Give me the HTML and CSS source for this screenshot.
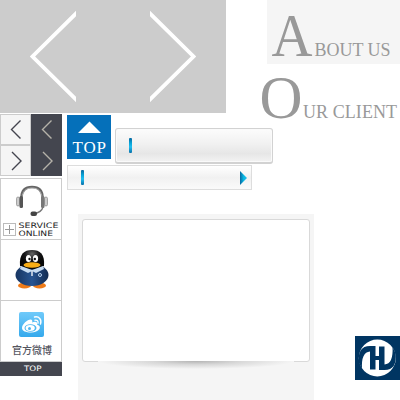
FILE: index.html
```html
<!DOCTYPE html>
<html lang="zh">
<head>
<meta charset="utf-8">
<title>Interface elements</title>
<link rel="stylesheet" href="styles.css">
</head>
<body>
<main class="main">
  <div class="slider">
    <svg class="arrow" width="46" height="92" viewBox="0 0 46 92"><path d="M48 1.500 2.500 46.500 48 91.500"/></svg>
    <svg class="arrow" width="46" height="92" viewBox="0 0 46 92"><path d="M-2 1.500 43.500 46.500-2 91.500"/></svg>
  </div>
  <div class="lower">
    <aside class="side">
      <div class="pager">
        <div class="cell"><svg width="29" height="29"><path d="M19.500 5.500 10.500 14.500 19.500 23.500"/></svg></div>
        <div class="cell dark"><svg width="29" height="29"><path d="M19.500 5.500 10.500 14.500 19.500 23.500"/></svg></div>
        <div class="cell"><svg width="29" height="29"><path d="M11 6 20 15 11 24"/></svg></div>
        <div class="cell dark"><svg width="29" height="29"><path d="M11 6 20 15 11 24"/></svg></div>
      </div>
      <div class="box">
        <svg width="60" height="60" viewBox="1 179 60 60">
          <path d="M21.500 200V198C21.500 190 26 187 32 187s10.500 3 10.500 11v3" fill="none" stroke="#666" stroke-width="2.600"/>
          <path d="M22 198C22.500 191 26 188 32 188s9.500 3 10 10" fill="none" stroke="#bbb" stroke-width=".8"/>
          <rect x="16.500" y="197" width="3" height="9" rx="1.500" fill="#ccc" stroke="#888" stroke-width=".7"/>
          <rect x="19.500" y="196" width="3.500" height="12" rx="1.500" fill="#555"/>
          <rect x="44.500" y="197" width="3" height="9" rx="1.500" fill="#ccc" stroke="#888" stroke-width=".7"/>
          <rect x="41" y="196" width="3.500" height="12" rx="1.500" fill="#777"/>
          <path d="M43 207C42 211 38 213 34 213.500" fill="none" stroke="#777" stroke-width="1.300"/>
          <rect x="30.500" y="211.500" width="6.500" height="4.500" rx="2" fill="#444"/>
          <rect x="3.500" y="223.500" width="12" height="12" fill="#fff" stroke="#bbb"/>
          <path d="M5 229.500h9M9.500 225v9" stroke="#999"/>
          <text class="pix" x="18.500" y="228" textLength="40" lengthAdjust="spacingAndGlyphs">SERVICE</text>
          <text class="pix" x="18.500" y="236" textLength="34.500" lengthAdjust="spacingAndGlyphs">ONLINE</text>
        </svg>
      </div>
      <div class="box">
        <svg width="60" height="60" viewBox="1 240 60 60">
          <defs>
            <linearGradient id="navy" x2="1"><stop offset="0" stop-color="#173561"/><stop offset=".5" stop-color="#285592"/><stop offset="1" stop-color="#122a50"/></linearGradient>
            <radialGradient id="head" cy=".2"><stop offset="0" stop-color="#666"/><stop offset=".6" stop-color="#171719"/><stop offset="1" stop-color="#080808"/></radialGradient>
          </defs>
          <ellipse cx="24.500" cy="285.500" rx="6.500" ry="3" fill="#ee7b19"/>
          <ellipse cx="39.500" cy="285.500" rx="6.500" ry="3" fill="#ee7b19"/>
          <ellipse cx="32" cy="275" rx="16.500" ry="11" fill="url(#navy)"/>
          <path d="M20 266C19 254 24 250 32 250s13 4 12 16q-12 7-24 0z" fill="url(#head)"/>
          <path d="M21 266l11 4 11-4 1 3-8 4-4-2-4 2-8-4z" fill="#c7dcf2"/>
          <path d="M32 271v5" stroke="#fff" stroke-width="1.300"/>
          <ellipse cx="28.500" cy="258.500" rx="2.600" ry="3.500" fill="#fff"/>
          <ellipse cx="35.500" cy="258.500" rx="2.600" ry="3.500" fill="#fff"/>
          <circle cx="29.500" cy="259" r="1.200" fill="#111"/><circle cx="34.800" cy="259" r="1.200" fill="#111"/>
          <ellipse cx="32" cy="265" rx="8.500" ry="2.800" fill="#f8ad16"/>
          <circle cx="40" cy="275" r="1.500" fill="none" stroke="#bcd5ef"/>
        </svg>
      </div>
      <div class="box">
        <svg width="60" height="60" viewBox="1 301 60 60">
          <defs><linearGradient id="sky" x2="0" y2="1"><stop offset="0" stop-color="#70cafa"/><stop offset="1" stop-color="#35a9ec"/></linearGradient></defs>
          <rect x="19" y="312" width="25" height="25" rx="2" fill="url(#sky)"/>
          <path d="M22 328c0-4 6-9 9-8.500 1.500.5 1.500 2 1 3 3-1.500 6-1 5 2 6 2 2 8-6 8-5 0-9-1.500-9-4.500z" fill="#fff"/>
          <ellipse cx="30.500" cy="328" rx="6" ry="3.800" fill="#4db7f1"/>
          <ellipse cx="30.200" cy="328" rx="4.600" ry="3" fill="#fff"/>
          <circle cx="29.500" cy="328.500" r="1.500" fill="#4db7f1"/>
          <path d="M34.500 317c4.500-1 7.500 2.500 6 7M35 320.200c2-.5 3.500 1 3 3" fill="none" stroke="#fff" stroke-width="1.400" stroke-linecap="round"/>
          <text class="weibo" x="12" y="353.500" textLength="40">官方微博</text>
        </svg>
      </div>
      <div class="foot">
        <svg width="62" height="14"><text class="pix light" x="24" y="9" textLength="17.500" lengthAdjust="spacingAndGlyphs">TOP</text></svg>
      </div>
    </aside>
    <section class="content">
      <div class="row">
        <div class="top">
          <svg width="44" height="44"><path d="M11 18 22.500 6.500 34 18z" fill="#fff"/><text x="5.500" y="37.500" textLength="33.500">TOP</text></svg>
        </div>
        <div class="bar tall"><i class="tick"></i></div>
      </div>
      <div class="bar slim"><i class="tick"></i><svg width="7" height="14"><defs><linearGradient id="tri" x2="1"><stop offset="0" stop-color="#0867a0"/><stop offset=".5" stop-color="#08b5e0"/><stop offset="1" stop-color="#20bff0"/></linearGradient></defs><path d="M0 0 7 7 0 14z" fill="url(#tri)"/></svg></div>
      <div class="panel"><div class="card"></div><div class="shade"></div></div>
    </section>
  </div>
</main>
<div class="titles">
  <h2 class="title about"><svg width="133" height="64"><text class="cap" x="4.500" y="55.500" textLength="41" lengthAdjust="spacingAndGlyphs">A</text><text x="47.500" y="55.500" textLength="76">BOUT US</text></svg></h2>
  <h2 class="title"><svg width="139" height="64"><text class="cap" x="-1.500" y="53.500" textLength="43" lengthAdjust="spacingAndGlyphs">O</text><text x="42" y="53.500" textLength="94">UR CLIENT</text></svg></h2>
  <div class="logo">
    <svg width="45" height="44" viewBox="0 0 45 44">
      <circle cx="22.300" cy="22" r="18.500" fill="#fff"/>
      <path d="M4 27Q2 10 15 10H20.500V33.500H15V15.500Q6 16 7 33zM40.500 17Q42.500 34 29.500 34H24V10.500H29.500V28.500Q38.500 28 37.500 11z" fill="#003562"/>
      <path d="M20 20h5v4h-5z" fill="#003562"/>
    </svg>
  </div>
</div>
</body>
</html>
```
FILE: styles.css
```css
* { box-sizing: border-box; }
body { margin: 0; width: 400px; height: 400px; overflow: hidden; display: flex; background: #fff; font-family: "Liberation Serif", serif; }
svg { display: block; flex: none; }
.main { width: 261px; flex: none; }
.slider { width: 226px; height: 113px; padding: 10px 30px 0; display: flex; gap: 74px; background: #ccc; }
.arrow path { fill: none; stroke: #fff; stroke-width: 3.8; }
.lower { display: flex; margin-top: 1px; }
.side { width: 62px; flex: none; }
.pager { display: grid; grid-template-columns: 31px 31px; grid-auto-rows: 31px; margin-bottom: 2px; }
.cell { border: 1px solid #ccc; background: #f5f5f5; }
.cell path { fill: none; stroke: #44454f; stroke-width: 1.4; }
.cell.dark { background: #44464f; border-color: #44464f; }
.cell.dark path { stroke: #b5b2a9; }
.box { height: 62px; border: 1px solid #ccc; background: #fff; }
.box + .box { margin-top: -1px; }
.pix { font: 400 7.5px "DejaVu Sans", sans-serif; fill: #222; }
.pix.light { fill: #fff; }
.weibo { font: 500 10px "Noto Sans CJK SC", sans-serif; fill: #55565f; }
.foot { height: 14px; background: #44464f; }
.content { flex: none; padding: 1px 0 0 5px; }
.row { display: flex; gap: 4px; }
.top { width: 44px; height: 44px; background: #0570ba; }
.top text { font-size: 17px; fill: #fff; }
.bar { display: flex; align-items: center; border: 1px solid #d2d2d2; }
.tall { width: 158px; height: 36px; margin-top: 13px; padding-left: 13px; border-width: 1px 1px 2px; border-radius: 3px; background: linear-gradient(#fcfcfc, #f1f1f1 45%, #e6e6e6 75%, #f3f3f3); box-shadow: inset 0 0 0 1px #fafafa; }
.slim { width: 185px; height: 25px; margin-top: 1px; padding: 0 4px 0 13px; justify-content: space-between; border-color: #ddd; background: linear-gradient(#fff, #f1f1f1 50%, #fafafa); }
.tick { width: 3px; height: 15px; border-radius: 1px; background: linear-gradient(#0868a0, #08a5d8 35%, #20bdf0 60%, #0870a8); }
.panel { width: 236px; height: 186px; margin: 24px 0 0 11px; padding: 5px 4px; background: #f5f5f5; }
.card { height: 143px; border: 1px solid #d9d9d9; border-radius: 3px; background: #fff; }
.shade { height: 8px; margin: -1px 16px 0; background: radial-gradient(50% 100% at 50% 0, #b4b4b4, #d8d8d8 45%, #f5f5f5); }
.titles { width: 139px; flex: none; }
.title { margin: 0; font-weight: 400; }
.title svg { overflow: visible; }
.title text { font-size: 18px; fill: #999; }
.title .cap { font-size: 61px; }
.about { margin-left: 6px; background: #f5f5f5; }
.logo { width: 45px; height: 44px; margin: 208px 0 0 94px; background: #003562; }
```
